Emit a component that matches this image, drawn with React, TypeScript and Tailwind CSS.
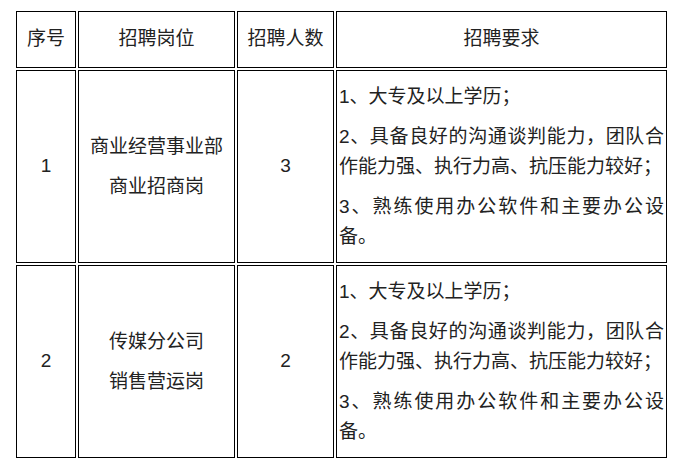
import React from "react";

const font = {
  fontFamily: '"Liberation Sans", "Noto Sans CJK SC", sans-serif',
};

const reqs = [
  "1、大专及以上学历；",
  "2、具备良好的沟通谈判能力，团队合作能力强、执行力高、抗压能力较好；",
  "3、熟练使用办公软件和主要办公设备。",
];

const rows = [
  { no: "1", pos: ["商业经营事业部", "商业招商岗"], count: "3" },
  { no: "2", pos: ["传媒分公司", "销售营运岗"], count: "2" },
];

function Cell({ children, className = "" }: { children: React.ReactNode; className?: string }) {
  return (
    <div className={`border border-black flex flex-col justify-center ${className}`}>{children}</div>
  );
}

export default function App() {
  return (
    <div className="w-[673px] h-[468px] bg-white pl-[16px] pt-[11px] text-[19px] text-[#222]" style={font}>
      <div className="grid grid-cols-[60px_157px_97px_331px] grid-rows-[57px_193px_193px] gap-[2px]">
        <Cell className="items-center">序号</Cell>
        <Cell className="items-center">招聘岗位</Cell>
        <Cell className="items-center">招聘人数</Cell>
        <Cell className="items-center">招聘要求</Cell>
        {rows.map((r) => (
          <React.Fragment key={r.no}>
            <Cell className="items-center">{r.no}</Cell>
            <Cell className="items-center gap-[10px]">
              {r.pos.map((p) => (
                <p key={p} className="leading-[30px]">{p}</p>
              ))}
            </Cell>
            <Cell className="items-center">{r.count}</Cell>
            <Cell className="px-[2px] gap-[10px]">
              {reqs.map((q) => (
                <p key={q} className="leading-[30px] text-justify">{q}</p>
              ))}
            </Cell>
          </React.Fragment>
        ))}
      </div>
    </div>
  );
}
